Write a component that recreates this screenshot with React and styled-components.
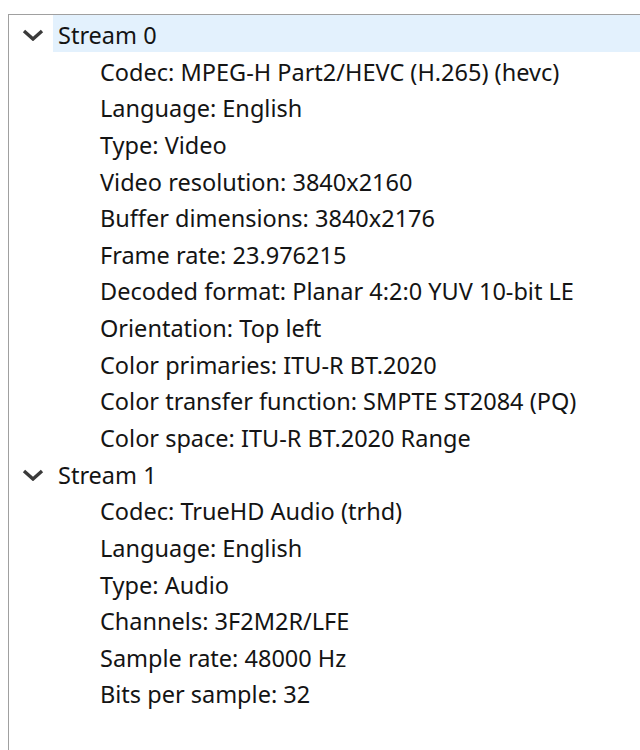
import React from 'react';
import styled, { createGlobalStyle } from 'styled-components';

const GlobalStyle = createGlobalStyle`
    html, body {
        margin: 0;
        padding: 0;
        background: #ffffff;
        overflow: hidden;
    }
    body {
        font-family: "Noto Sans", "Open Sans", sans-serif;
    }
`;

const streams = [
    {
        name: 'Stream 0',
        selected: true,
        props: [
            'Codec: MPEG-H Part2/HEVC (H.265) (hevc)',
            'Language: English',
            'Type: Video',
            'Video resolution: 3840x2160',
            'Buffer dimensions: 3840x2176',
            'Frame rate: 23.976215',
            'Decoded format: Planar 4:2:0 YUV 10-bit LE',
            'Orientation: Top left',
            'Color primaries: ITU-R BT.2020',
            'Color transfer function: SMPTE ST2084 (PQ)',
            'Color space: ITU-R BT.2020 Range',
        ],
    },
    {
        name: 'Stream 1',
        selected: false,
        props: [
            'Codec: TrueHD Audio (trhd)',
            'Language: English',
            'Type: Audio',
            'Channels: 3F2M2R/LFE',
            'Sample rate: 48000 Hz',
            'Bits per sample: 32',
        ],
    },
];

const Chevron = () => (
    <svg width="22" height="12" viewBox="0 0 22 12">
        <path d="M2 2 L11 10 L20 2" fill="none" stroke="#3a3a3a" strokeWidth="3.4" />
    </svg>
);

const App = () => {
    return (
        <>
            <GlobalStyle />
            <Page>
                <Tree>
                    {streams.map((s) => (
                        <Group key={s.name}>
                            <StreamRow>
                                <Toggle><Chevron /></Toggle>
                                <StreamLabel selected={s.selected}>{s.name}</StreamLabel>
                            </StreamRow>
                            {s.props.map((p) => (
                                <PropRow key={p}>{p}</PropRow>
                            ))}
                        </Group>
                    ))}
                </Tree>
            </Page>
        </>
    );
};

export default App;

const Page = styled.div`
    width: 640px;
    height: 750px;
    padding-top: 14px;
    padding-left: 8px;
    box-sizing: border-box;
`;

const Tree = styled.div`
    height: 100%;
    border-top: 1px solid #a0a0a0;
    border-left: 1px solid #a0a0a0;
    color: #141414;
    font-size: 23.5px;
`;

const Group = styled.div`
    display: flex;
    flex-direction: column;
`;

const StreamRow = styled.div`
    display: flex;
    align-items: stretch;
    height: 37px;
`;

const Toggle = styled.div`
    width: 44px;
    display: flex;
    align-items: center;
    justify-content: flex-end;
    padding-right: 9px;
    padding-top: 3px;
    box-sizing: border-box;
`;

const StreamLabel = styled.div`
    flex: 1;
    display: flex;
    align-items: center;
    padding: 3px 0 0 5px;
    background: ${(p) => (p.selected ? '#e3f1fd' : 'transparent')};
`;

const PropRow = styled.div`
    height: 36.6px;
    display: flex;
    align-items: center;
    padding: 3px 0 0 91px;
    box-sizing: border-box;
    white-space: nowrap;
`;
